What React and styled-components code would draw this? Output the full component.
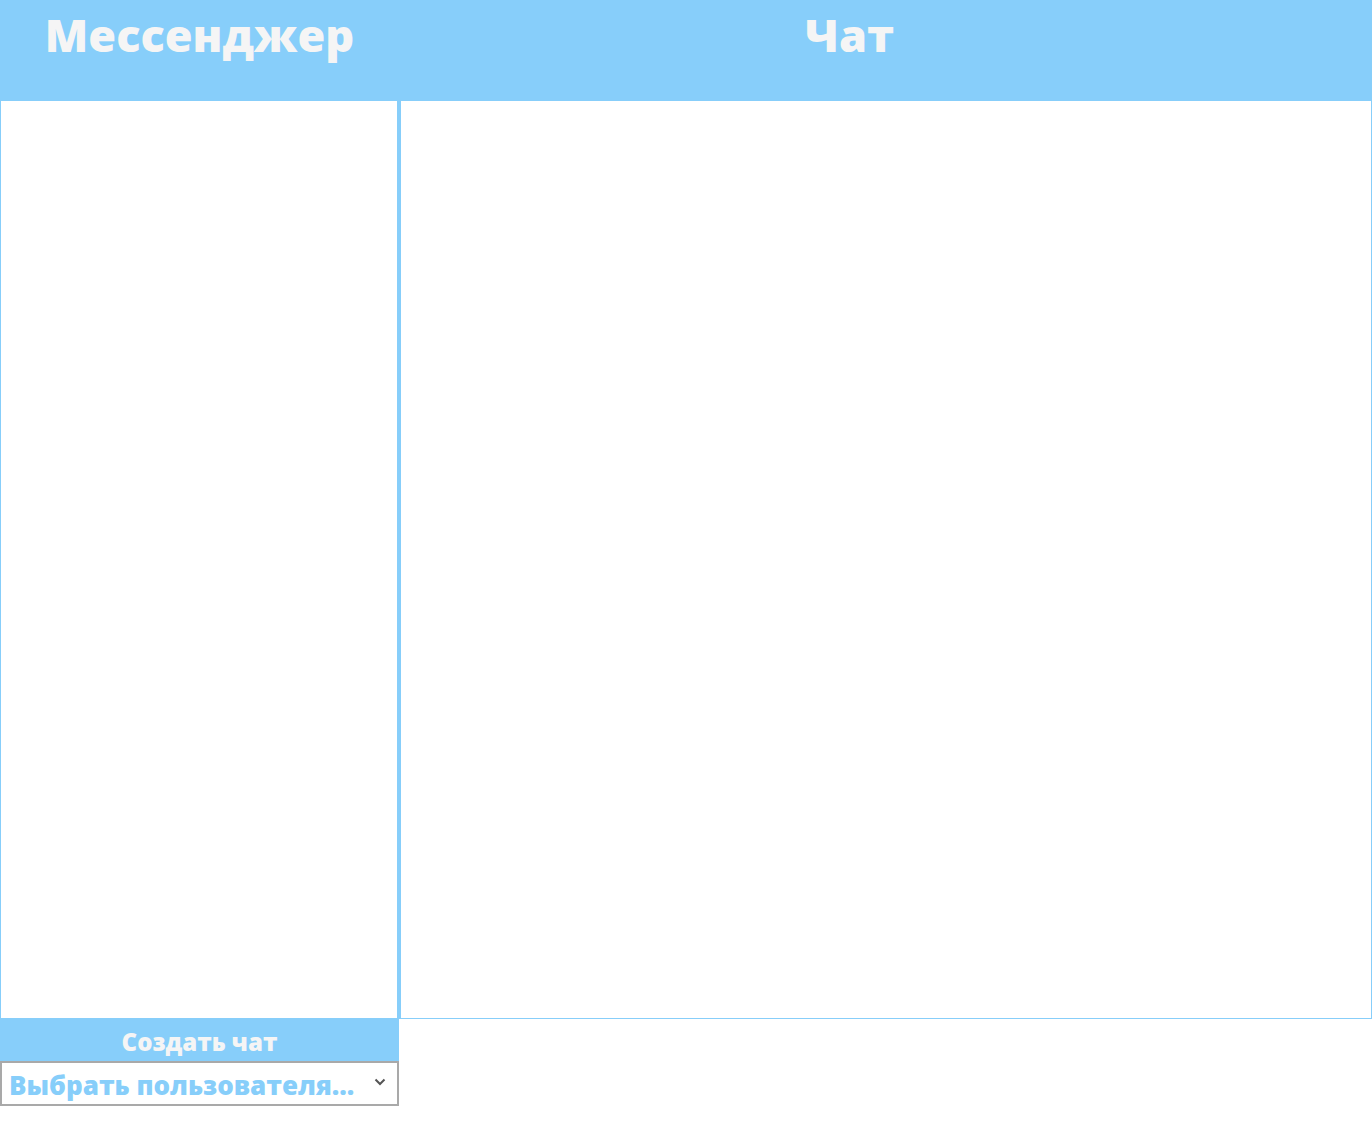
import React, { useState } from "react";
import styled, { createGlobalStyle } from "styled-components";

const GlobalStyle = createGlobalStyle`
    body {
        margin: 0;
        background: #ffffff;
        font-family: "Open Sans", "Liberation Sans", sans-serif;
    }
`

function App() {
    const [user, setUser] = useState("");

    return (
        <>
            <GlobalStyle />
            <Layout>
                <Header>
                    <Title>Мессенджер</Title>
                </Header>
                <Header>
                    <Title $shift>Чат</Title>
                </Header>
                <ChatList />
                <ChatWindow />
                <Sidebar>
                    <CreateButton>Создать чат</CreateButton>
                    <SelectWrap>
                        <UserSelect value={user} onChange={(e) => setUser(e.target.value)}>
                            <option value="">Выбрать пользователя...</option>
                        </UserSelect>
                        <Chevron viewBox="0 0 12 8">
                            <path d="M1.5 1.5 L6 6 L10.5 1.5" />
                        </Chevron>
                    </SelectWrap>
                </Sidebar>
            </Layout>
        </>
    )
}

export default App;


const Layout = styled.div`
    display: grid;
    grid-template-columns: 399px 1fr;
    grid-template-rows: 101px 918px auto;
    width: 1372px;
`
const Header = styled.div`
    background-color: #87cefa;
    display: flex;
    justify-content: center;
`
const Title = styled.h1`
    margin: 0;
    padding-top: 12px;
    padding-right: ${(p) => (p.$shift ? "72px" : "0")};
    font-family: "Open Sans", "Liberation Sans", sans-serif;
    font-weight: 800;
    font-size: 45px;
    line-height: 1;
    color: #f5f5f5;
`
const ChatList = styled.div`
    border: 1px solid #87cefa;
    border-top: none;
    border-right-width: 2px;
`
const ChatWindow = styled.div`
    border: 1px solid #87cefa;
    border-top: none;
    border-left-width: 2px;
`
const Sidebar = styled.div`
    display: flex;
    flex-direction: column;
`
const CreateButton = styled.button`
    height: 42px;
    border: none;
    background: #87cefa;
    color: #f5f5f5;
    font-family: "Open Sans", "Liberation Sans", sans-serif;
    font-weight: 800;
    font-size: 24px;
    cursor: pointer;
    padding: 2px 0 0;
`
const SelectWrap = styled.div`
    position: relative;
`
const UserSelect = styled.select`
    width: 100%;
    height: 45px;
    appearance: none;
    border: 2px solid #a9a9a9;
    background: #ffffff;
    color: #87cefa;
    font-family: "Open Sans", "Liberation Sans", sans-serif;
    font-weight: 800;
    font-size: 26px;
    padding: 2px 30px 0 7px;
    outline: none;
`
const Chevron = styled.svg`
    position: absolute;
    right: 13px;
    top: 17px;
    width: 12px;
    height: 8px;
    fill: none;
    stroke: #555555;
    stroke-width: 2;
    pointer-events: none;
`
